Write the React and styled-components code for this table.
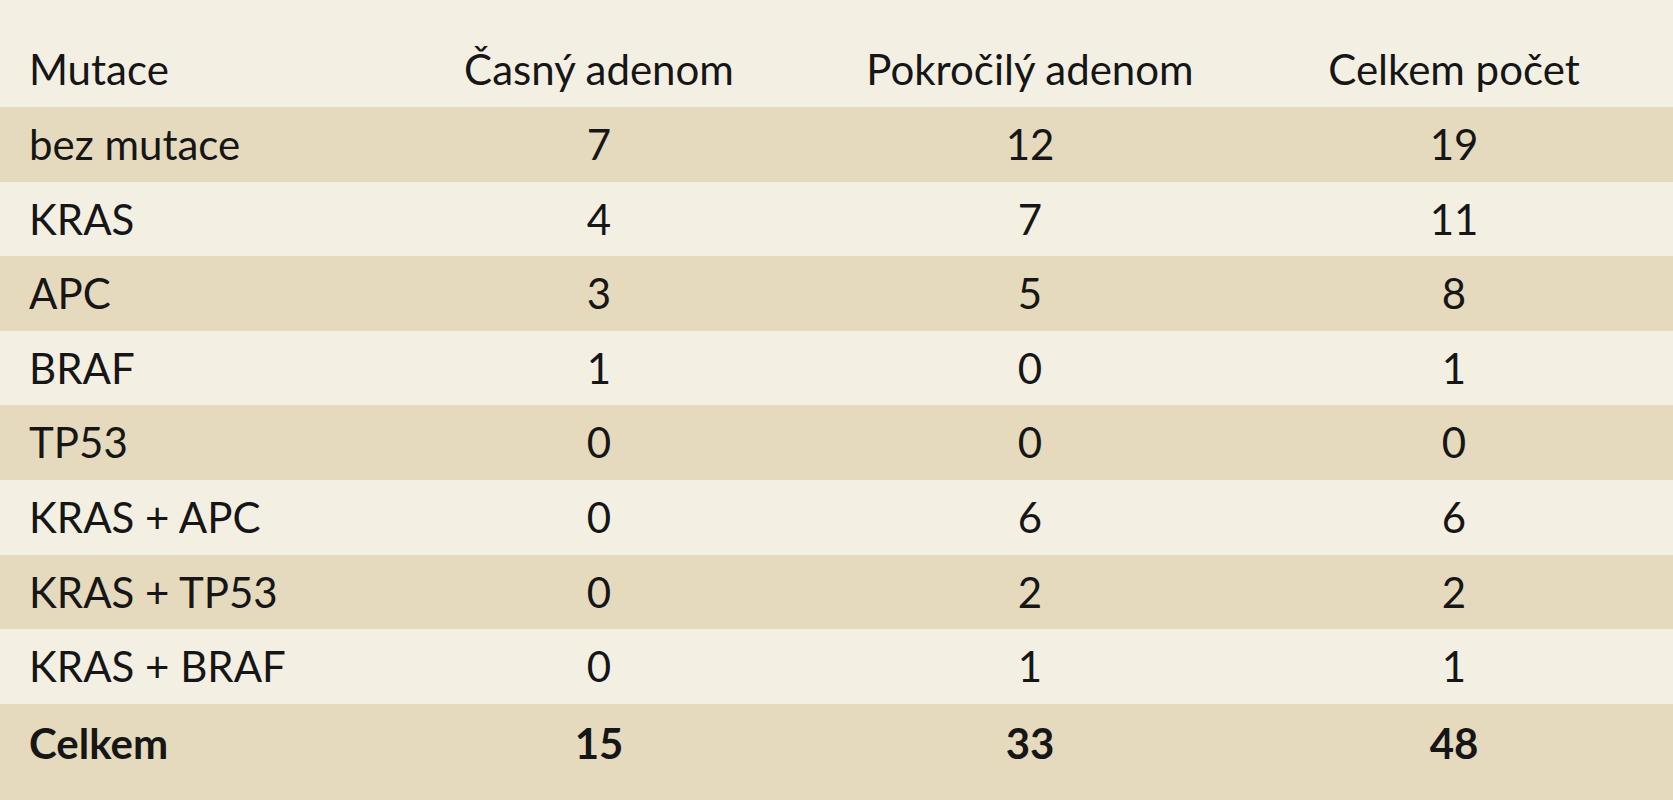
import styled, { createGlobalStyle } from "styled-components";

const GlobalStyle = createGlobalStyle`
    html, body {
        margin : 0;
        padding : 0;
        overflow : hidden;
        background-color : #f4efe3;
    }
    body {
        font-family : Lato, "Open Sans", sans-serif;
        color : #161616;
    }
`;

const Page = styled.div`
    width : 100%;
    min-width : 1673px;
    height : 800px;
    background-color : #f4efe3;
`;

const Table = styled.table`
    width : 100%;
    border-collapse : collapse;
    table-layout : fixed;
    font-size : 42px;
    line-height : 74.6px;
`;

const Col = styled.col`
    width : ${(props) => (props.$width ? `${props.$width}px` : "auto")};
`;

const HeadCell = styled.th`
    font-weight : 400;
    text-align : ${(props) => (props.$left ? "left" : "center")};
    padding : 32px ${(props) => (props.$end ? "10px" : "0")} 0 ${(props) => (props.$left ? "29px" : "0")};
    height : 75px;
    vertical-align : top;
    white-space : nowrap;
`;

const Row = styled.tr`
    background-color : ${(props) => (props.$shade ? "#e5dabd" : "#f4efe3")};
`;

const Cell = styled.td`
    padding : ${(props) => (props.$total ? "2px" : "0")} ${(props) => (props.$end ? "10px" : "0")} 0 ${(props) => (props.$left ? "29px" : "0")};
    height : ${(props) => (props.$total ? "94px" : "74.6px")};
    text-align : ${(props) => (props.$left ? "left" : "center")};
    font-weight : ${(props) => (props.$total ? 700 : 400)};
    vertical-align : top;
    white-space : nowrap;
`;

const rows = [
    ["bez mutace", 7, 12, 19],
    ["KRAS", 4, 7, 11],
    ["APC", 3, 5, 8],
    ["BRAF", 1, 0, 1],
    ["TP53", 0, 0, 0],
    ["KRAS + APC", 0, 6, 6],
    ["KRAS + TP53", 0, 2, 2],
    ["KRAS + BRAF", 0, 1, 1],
];

const App = () => {
    return (
        <Page>
            <GlobalStyle />
            <Table>
                <colgroup>
                    <Col $width={383} />
                    <Col $width={432} />
                    <Col $width={430} />
                    <Col />
                </colgroup>
                <thead>
                    <tr>
                        <HeadCell $left>Mutace</HeadCell>
                        <HeadCell>Časný adenom</HeadCell>
                        <HeadCell>Pokročilý adenom</HeadCell>
                        <HeadCell $end>Celkem počet</HeadCell>
                    </tr>
                </thead>
                <tbody>
                    {rows.map((r, i) => (
                        <Row key={r[0]} $shade={i % 2 === 0}>
                            <Cell $left>{r[0]}</Cell>
                            <Cell>{r[1]}</Cell>
                            <Cell>{r[2]}</Cell>
                            <Cell $end>{r[3]}</Cell>
                        </Row>
                    ))}
                    <Row $shade>
                        <Cell $left $total>Celkem</Cell>
                        <Cell $total>15</Cell>
                        <Cell $total>33</Cell>
                        <Cell $total $end>48</Cell>
                    </Row>
                </tbody>
            </Table>
        </Page>
    );
};

export default App;
